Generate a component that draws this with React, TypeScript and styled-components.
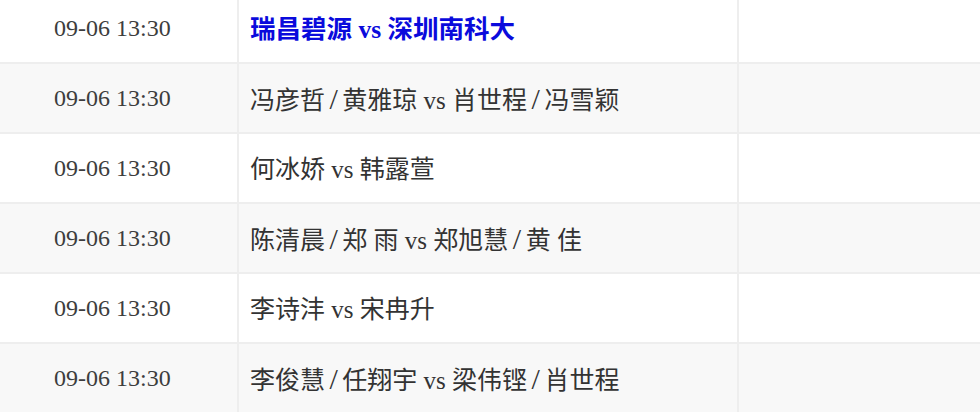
import styled, { createGlobalStyle } from 'styled-components';

const GlobalStyle = createGlobalStyle`
	html, body {
		margin: 0;
		padding: 0;
		background: #ffffff;
		overflow: hidden;
	}
`;

const Table = styled.table`
	width: 980px;
	margin-top: -7px;
	border-collapse: collapse;
	table-layout: fixed;
	font-family: "Liberation Serif", "Noto Sans CJK SC", serif;
	color: #333333;
`;

const Row = styled.tr<{ $striped: boolean }>`
	height: 70px;
	background: ${(p) => (p.$striped ? '#f8f8f8' : '#ffffff')};
	border-bottom: 2px solid #eeeeee;
`;

const TimeCell = styled.td`
	width: 238px;
	padding: 1px 0 0 54px;
	box-sizing: border-box;
	font-size: 24px;
	color: #3d3d3d;
	border-right: 2px solid #eeeeee;
	white-space: nowrap;
`;

const MatchCell = styled.td`
	width: 500px;
	padding: 4px 0 0 11px;
	box-sizing: border-box;
	font-size: 25px;
	line-height: 30px;
	border-right: 2px solid #eeeeee;
	white-space: nowrap;
`;

const EmptyCell = styled.td`
	padding: 0;
`;

const MatchLink = styled.a`
	color: #0a0adc;
	font-weight: bold;
	font-size: 25.5px;
	text-decoration: none;
`;

const Slash = styled.span`
	font-size: 30px;
	margin: 0 4.5px;
`;

const matches = [
	{ time: '09-06 13:30', title: '瑞昌碧源 vs 深圳南科大', link: true },
	{ time: '09-06 13:30', title: '冯彦哲/黄雅琼 vs 肖世程/冯雪颖' },
	{ time: '09-06 13:30', title: '何冰娇 vs 韩露萱' },
	{ time: '09-06 13:30', title: '陈清晨/郑 雨 vs 郑旭慧/黄 佳' },
	{ time: '09-06 13:30', title: '李诗沣 vs 宋冉升' },
	{ time: '09-06 13:30', title: '李俊慧/任翔宇 vs 梁伟铿/肖世程' },
];

function Title({ text }: { text: string }) {
	const parts = text.split('/');
	return (
		<>
			{parts.map((part, i) => (
				<span key={i}>
					{i > 0 && <Slash>/</Slash>}
					{part}
				</span>
			))}
		</>
	);
}

export default function App() {
	return (
		<>
			<GlobalStyle />
			<Table>
				<tbody>
					{matches.map((m, i) => (
						<Row key={i} $striped={i % 2 === 1}>
							<TimeCell>{m.time}</TimeCell>
							<MatchCell>
								{m.link ? (
									<MatchLink href="#">{m.title}</MatchLink>
								) : (
									<Title text={m.title} />
								)}
							</MatchCell>
							<EmptyCell />
						</Row>
					))}
				</tbody>
			</Table>
		</>
	);
}
